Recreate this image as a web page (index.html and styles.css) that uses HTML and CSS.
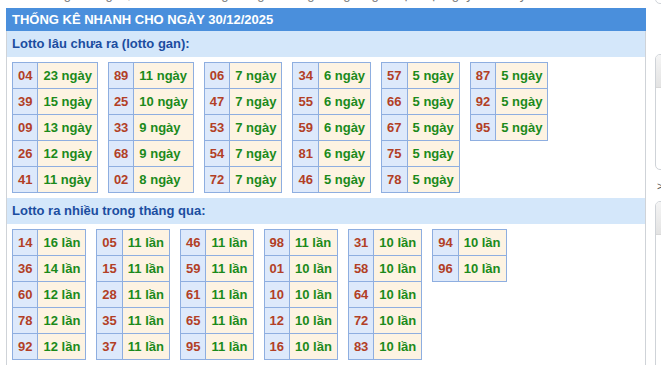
FILE: index.html
```html
<!DOCTYPE html>
<html lang="vi">
<head>
<meta charset="utf-8">
<title>Thống kê nhanh</title>
<link rel="stylesheet" href="styles.css">
</head>
<body>
<div class="page">
  <div class="main">
    <div class="top-strip"><div class="top-text">Xem thống kê lô gan, lô ra nhiều trong tháng và bảng thống kê giải đặc biệt ngày hôm nay</div></div>
    <div class="panel">
      <div class="panel-title">THỐNG KÊ NHANH CHO NGÀY 30/12/2025</div>
      <div class="sub-title">Lotto lâu chưa ra (lotto gan):</div>
      <div class="tables">
        <table class="lt"><tr><td class="n">04</td><td class="v">23 ngày</td></tr><tr><td class="n">39</td><td class="v">15 ngày</td></tr><tr><td class="n">09</td><td class="v">13 ngày</td></tr><tr><td class="n">26</td><td class="v">12 ngày</td></tr><tr><td class="n">41</td><td class="v">11 ngày</td></tr></table>
        <table class="lt"><tr><td class="n">89</td><td class="v">11 ngày</td></tr><tr><td class="n">25</td><td class="v">10 ngày</td></tr><tr><td class="n">33</td><td class="v">9 ngày</td></tr><tr><td class="n">68</td><td class="v">9 ngày</td></tr><tr><td class="n">02</td><td class="v">8 ngày</td></tr></table>
        <table class="lt"><tr><td class="n">06</td><td class="v">7 ngày</td></tr><tr><td class="n">47</td><td class="v">7 ngày</td></tr><tr><td class="n">53</td><td class="v">7 ngày</td></tr><tr><td class="n">54</td><td class="v">7 ngày</td></tr><tr><td class="n">72</td><td class="v">7 ngày</td></tr></table>
        <table class="lt"><tr><td class="n">34</td><td class="v">6 ngày</td></tr><tr><td class="n">55</td><td class="v">6 ngày</td></tr><tr><td class="n">59</td><td class="v">6 ngày</td></tr><tr><td class="n">81</td><td class="v">6 ngày</td></tr><tr><td class="n">46</td><td class="v">5 ngày</td></tr></table>
        <table class="lt"><tr><td class="n">57</td><td class="v">5 ngày</td></tr><tr><td class="n">66</td><td class="v">5 ngày</td></tr><tr><td class="n">67</td><td class="v">5 ngày</td></tr><tr><td class="n">75</td><td class="v">5 ngày</td></tr><tr><td class="n">78</td><td class="v">5 ngày</td></tr></table>
        <table class="lt"><tr><td class="n">87</td><td class="v">5 ngày</td></tr><tr><td class="n">92</td><td class="v">5 ngày</td></tr><tr><td class="n">95</td><td class="v">5 ngày</td></tr></table>
      </div>
      <div class="sub-title">Lotto ra nhiều trong tháng qua:</div>
      <div class="tables">
        <table class="lt"><tr><td class="n">14</td><td class="v">16 lần</td></tr><tr><td class="n">36</td><td class="v">14 lần</td></tr><tr><td class="n">60</td><td class="v">12 lần</td></tr><tr><td class="n">78</td><td class="v">12 lần</td></tr><tr><td class="n">92</td><td class="v">12 lần</td></tr></table>
        <table class="lt"><tr><td class="n">05</td><td class="v">11 lần</td></tr><tr><td class="n">15</td><td class="v">11 lần</td></tr><tr><td class="n">28</td><td class="v">11 lần</td></tr><tr><td class="n">35</td><td class="v">11 lần</td></tr><tr><td class="n">37</td><td class="v">11 lần</td></tr></table>
        <table class="lt"><tr><td class="n">46</td><td class="v">11 lần</td></tr><tr><td class="n">59</td><td class="v">11 lần</td></tr><tr><td class="n">61</td><td class="v">11 lần</td></tr><tr><td class="n">65</td><td class="v">11 lần</td></tr><tr><td class="n">95</td><td class="v">11 lần</td></tr></table>
        <table class="lt"><tr><td class="n">98</td><td class="v">11 lần</td></tr><tr><td class="n">01</td><td class="v">10 lần</td></tr><tr><td class="n">10</td><td class="v">10 lần</td></tr><tr><td class="n">12</td><td class="v">10 lần</td></tr><tr><td class="n">16</td><td class="v">10 lần</td></tr></table>
        <table class="lt"><tr><td class="n">31</td><td class="v">10 lần</td></tr><tr><td class="n">58</td><td class="v">10 lần</td></tr><tr><td class="n">64</td><td class="v">10 lần</td></tr><tr><td class="n">72</td><td class="v">10 lần</td></tr><tr><td class="n">83</td><td class="v">10 lần</td></tr></table>
        <table class="lt"><tr><td class="n">94</td><td class="v">10 lần</td></tr><tr><td class="n">96</td><td class="v">10 lần</td></tr></table>
      </div>
    </div>
  </div>
  <div class="side">
    <div class="box box-top"></div>
    <div class="box box-one"><div class="box-head"></div></div>
    <div class="arrow">&gt;</div>
    <div class="box box-two"><div class="box-head"></div></div>
  </div>
</div>
</body>
</html>
```

FILE: styles.css
```css
html, body {
  margin: 0;
  padding: 0;
  overflow: hidden;
  background: #ffffff;
  font-family: "Liberation Sans", Arial, sans-serif;
}

.page {
  display: flex;
  align-items: flex-start;
  width: 1000px;
  height: 365px;
}

.main {
  width: 640px;
  margin-left: 6px;
  flex: none;
}

.top-strip {
  height: 8px;
  overflow: hidden;
}

.top-text {
  margin-top: -12px;
  font-size: 13px;
  line-height: 14px;
  color: #777777;
  white-space: nowrap;
  padding-left: 2px;
}

.panel {
  border-left: 1px solid #cfd3d8;
  border-right: 1px solid #cfd3d8;
  height: 400px;
}

.panel-title {
  margin: 0 -1px;
  height: 23px;
  line-height: 23px;
  padding-left: 6px;
  background: #4a8fdc;
  color: #ffffff;
  font-size: 13px;
  font-weight: bold;
}

.sub-title {
  height: 26px;
  line-height: 26px;
  padding-left: 5px;
  background: #d4e7fa;
  color: #1b4da0;
  font-size: 13px;
  font-weight: bold;
}

.tables {
  display: flex;
  align-items: flex-start;
  gap: 10px;
  padding: 5px;
}

.lt {
  border-collapse: collapse;
  font-size: 13px;
  font-weight: bold;
}

.lt td {
  border: 1px solid #8eaee0;
  height: 25px;
  padding: 0 5px;
  line-height: 25px;
  white-space: nowrap;
}

.lt td.n {
  background: #dde9fb;
  color: #b23f26;
  text-align: center;
}

.lt td.v {
  background: #fdf3e2;
  color: #1b8a1b;
}

.side {
  margin-left: 9px;
  width: 300px;
  flex: none;
}

.box {
  border: 1px solid #cfd3d8;
  border-radius: 5px;
  background: #ffffff;
  overflow: hidden;
}

.box-top {
  height: 20px;
  margin-top: -18px;
}

.box-one {
  margin-top: 50px;
  height: 114px;
}

.box-head {
  height: 32px;
  background: linear-gradient(#f4f4f4, #e3e3e3);
  border-bottom: 1px solid #d8d8d8;
}

.arrow {
  margin-top: 8px;
  height: 17px;
  font-size: 11px;
  line-height: 17px;
  color: #555555;
  padding-left: 2px;
}

.box-two {
  margin-top: 6px;
  height: 200px;
}
```
